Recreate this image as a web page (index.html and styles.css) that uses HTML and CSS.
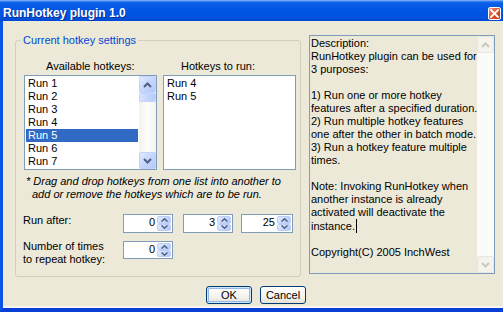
FILE: index.html
```html
<!DOCTYPE html>
<html>
<head>
<meta charset="utf-8">
<title>RunHotkey plugin 1.0</title>
<link rel="stylesheet" href="styles.css">
</head>
<body>
<div class="window">
  <div class="titlebar">
    <span class="title">RunHotkey plugin 1.0</span>
    <span class="close"><svg width="9" height="9" viewBox="0 0 9 9"><path d="M1 1L8 8M8 1L1 8" stroke="#fff" stroke-width="1.8" stroke-linecap="square"/></svg></span>
  </div>
  <div class="client">
    <div class="main">
      <fieldset class="group">
        <legend>Current hotkey settings</legend>
        <div class="lists">
          <div class="col">
            <div class="cap cap-a">Available hotkeys:</div>
            <div class="listbox">
              <ul class="items">
                <li>Run 1</li>
                <li>Run 2</li>
                <li>Run 3</li>
                <li>Run 4</li>
                <li class="sel">Run 5</li>
                <li>Run 6</li>
                <li>Run 7</li>
              </ul>
              <div class="vscroll">
                <div class="sb-btn"><svg width="9" height="6" viewBox="0 0 9 6"><path d="M1 5L4.5 1.5L8 5" fill="none" stroke="#4d6185" stroke-width="2"/></svg></div>
                <div class="thumb"></div>
                <div class="track"></div>
                <div class="sb-btn"><svg width="9" height="6" viewBox="0 0 9 6"><path d="M1 1L4.5 4.5L8 1" fill="none" stroke="#4d6185" stroke-width="2"/></svg></div>
              </div>
            </div>
          </div>
          <div class="col">
            <div class="cap cap-b">Hotkeys to run:</div>
            <div class="listbox">
              <ul class="items">
                <li>Run 4</li>
                <li>Run 5</li>
              </ul>
            </div>
          </div>
        </div>
        <p class="note">* Drag and drop hotkeys from one list into another to<br>add or remove the hotkeys which are to be run.</p>
        <div class="settings">
          <div class="lbl">Run after:</div>
          <div class="spin"><span class="spin-val">0</span><span class="spin-btns"><span><svg width="7" height="4" viewBox="0 0 7 4"><path d="M0.5 3.5L3.5 0.8L6.5 3.5" fill="none" stroke="#4d6185" stroke-width="1.5"/></svg></span><span><svg width="7" height="4" viewBox="0 0 7 4"><path d="M0.5 0.5L3.5 3.2L6.5 0.5" fill="none" stroke="#4d6185" stroke-width="1.5"/></svg></span></span></div>
          <div class="spin"><span class="spin-val">3</span><span class="spin-btns"><span><svg width="7" height="4" viewBox="0 0 7 4"><path d="M0.5 3.5L3.5 0.8L6.5 3.5" fill="none" stroke="#4d6185" stroke-width="1.5"/></svg></span><span><svg width="7" height="4" viewBox="0 0 7 4"><path d="M0.5 0.5L3.5 3.2L6.5 0.5" fill="none" stroke="#4d6185" stroke-width="1.5"/></svg></span></span></div>
          <div class="spin spin-wide"><span class="spin-val">25</span><span class="spin-btns"><span><svg width="7" height="4" viewBox="0 0 7 4"><path d="M0.5 3.5L3.5 0.8L6.5 3.5" fill="none" stroke="#4d6185" stroke-width="1.5"/></svg></span><span><svg width="7" height="4" viewBox="0 0 7 4"><path d="M0.5 0.5L3.5 3.2L6.5 0.5" fill="none" stroke="#4d6185" stroke-width="1.5"/></svg></span></span></div>
          <div class="lbl">Number of times<br>to repeat hotkey:</div>
          <div class="spin spin-low"><span class="spin-val">0</span><span class="spin-btns"><span><svg width="7" height="4" viewBox="0 0 7 4"><path d="M0.5 3.5L3.5 0.8L6.5 3.5" fill="none" stroke="#4d6185" stroke-width="1.5"/></svg></span><span><svg width="7" height="4" viewBox="0 0 7 4"><path d="M0.5 0.5L3.5 3.2L6.5 0.5" fill="none" stroke="#4d6185" stroke-width="1.5"/></svg></span></span></div>
        </div>
      </fieldset>
      <div class="desc">
        <div class="desc-text">Description:<br>RunHotkey plugin can be used for<br>3 purposes:<br><br>1) Run one or more hotkey<br>features after a specified duration.<br>2) Run multiple hotkey features<br>one after the other in batch mode.<br>3) Run a hotkey feature multiple<br>times.<br><br>Note: Invoking RunHotkey when<br>another instance is already<br>activated will deactivate the<br>instance.<span class="caret"></span><br><br>Copyright(C) 2005 InchWest</div>
        <div class="vscroll off">
          <div class="sb-btn"><svg width="9" height="6" viewBox="0 0 9 6"><path d="M1 5L4.5 1.5L8 5" fill="none" stroke="#cac8bb" stroke-width="2"/></svg></div>
          <div class="track"></div>
          <div class="sb-btn"><svg width="9" height="6" viewBox="0 0 9 6"><path d="M1 1L4.5 4.5L8 1" fill="none" stroke="#cac8bb" stroke-width="2"/></svg></div>
        </div>
      </div>
    </div>
    <div class="buttons">
      <button class="btn btn-default">OK</button>
      <button class="btn">Cancel</button>
    </div>
  </div>
</div>
</body>
</html>
```

FILE: styles.css
```css
* { box-sizing: border-box; }
html, body { margin: 0; padding: 0; }
body {
  width: 503px;
  height: 312px;
  overflow: hidden;
  font-family: "Liberation Sans", Arial, sans-serif;
  font-size: 11px;
  line-height: 13px;
  color: #000;
  background: #ece9d8;
}
.window {
  width: 503px;
  height: 312px;
  display: flex;
  flex-direction: column;
}
.titlebar {
  height: 21px;
  flex: none;
  display: flex;
  align-items: flex-start;
  padding: 6px 2px 0 3px;
  background: linear-gradient(#a9c8fb 0, #3d86f2 1px, #0a5ee8 3px, #0056e6 10px, #0053e0 17px, #0049d4 21px);
}
.title {
  font-weight: bold;
  font-size: 12px;
  line-height: 15px;
  color: #fff;
  text-shadow: 1px 1px 0 #0b2f8c;
  white-space: nowrap;
}
.close {
  margin-left: auto;
  margin-top: 1px;
  width: 13px;
  height: 13px;
  border: 1px solid #fff;
  border-radius: 2px;
  background: linear-gradient(135deg, #f39a7c 0%, #e2552f 45%, #c53714 100%);
  display: flex;
  align-items: center;
  justify-content: center;
}
.close svg { display: block; }
.client {
  flex: 1;
  display: flex;
  flex-direction: column;
  background: #ece9d8;
  border-left: 3px solid #0a56e4;
  border-bottom: 4px solid #0a3fd6;
  box-shadow: inset 0 -2px 0 #f7f6f1;
}
.main {
  display: flex;
  align-items: flex-start;
  padding: 13px 0 0 12px;
}
.group {
  margin: 0;
  width: 286px;
  height: 243px;
  padding: 0 4px 0 8px;
  border: 1px solid #d0d0bf;
  border-radius: 3px;
  min-width: 0;
}
.group legend {
  margin-left: -3px;
  padding: 0 2px;
  color: #0046d5;
  line-height: 13px;
}
.lists {
  display: flex;
  gap: 6px;
  padding-top: 13px;
}
.col {
  width: 133px;
  display: flex;
  flex-direction: column;
}
.cap {
  margin-bottom: 2px;
  white-space: nowrap;
}
.cap-a { padding-left: 22px; }
.cap-b { padding-left: 18px; }
.listbox {
  height: 95px;
  border: 1px solid #7f9db9;
  background: #fff;
  display: flex;
}
.items {
  list-style: none;
  margin: 0;
  padding: 1px;
  flex: 1;
  min-width: 0;
  overflow: hidden;
}
.items li {
  height: 13px;
  padding-left: 2px;
  white-space: nowrap;
}
.items li.sel {
  background: #316ac5;
  color: #fff;
}
.vscroll {
  width: 17px;
  flex: none;
  display: flex;
  flex-direction: column;
  background: linear-gradient(90deg, #f3f1ec, #fdfdfa 50%, #f3f1ec);
}
.sb-btn {
  height: 17px;
  flex: none;
  display: flex;
  align-items: center;
  justify-content: center;
  border: 1px solid #c3d3fd;
  border-radius: 2px;
  background: linear-gradient(135deg, #e2eafe 0%, #c6d5fb 50%, #b4c8f6 100%);
}
.sb-btn svg { display: block; }
.thumb {
  height: 9px;
  flex: none;
  border: 1px solid #c3d3fd;
  border-radius: 2px;
  background: linear-gradient(90deg, #d8e3fd, #c5d5fb 50%, #b9cbf8);
}
.track { flex: 1; }
.vscroll.off { background: #fbfbf9; }
.vscroll.off .sb-btn {
  border-color: #e8e7df;
  background: #f4f3ee;
}
.note {
  margin: 5px 0 0 2px;
  padding-left: 6px;
  text-indent: -6px;
  font-style: italic;
  white-space: nowrap;
}
.settings {
  display: grid;
  grid-template-columns: 99px 60px 58px 52px;
  row-gap: 7px;
  margin-top: 13px;
}
.lbl {
  margin-left: -1px;
  white-space: nowrap;
}
.spin {
  width: 50px;
  height: 19px;
  border: 1px solid #7f9db9;
  background: #fff;
  display: flex;
}
.spin-wide { width: 52px; }
.spin-low { height: 18px; margin-top: 1px; }
.spin-val {
  flex: 1;
  text-align: right;
  line-height: 14px;
  padding-right: 2px;
}
.spin-btns {
  width: 15px;
  flex: none;
  display: flex;
  flex-direction: column;
  padding: 1px 1px 1px 0;
}
.spin-btns span {
  flex: 1;
  display: flex;
  align-items: center;
  justify-content: center;
  border: 1px solid #bccdf6;
  border-radius: 2px;
  background: linear-gradient(135deg, #e4ecfe 0%, #c8d7fb 55%, #b6c9f6 100%);
}
.spin-btns svg { display: block; }
.desc {
  margin: 1px 0 0 8px;
  width: 186px;
  height: 239px;
  border: 1px solid #7f9db9;
  display: flex;
}
.desc-text {
  flex: 1;
  padding: 1px 0 0 1px;
  white-space: nowrap;
  overflow: hidden;
}
.caret {
  display: inline-block;
  width: 1px;
  height: 14px;
  background: #000;
  vertical-align: -3px;
  margin-left: 1px;
}
.buttons {
  display: flex;
  justify-content: center;
  gap: 8px;
  padding: 9px 0 0 6px;
}
.btn {
  width: 46px;
  height: 18px;
  margin: 0;
  padding: 0;
  border: 1px solid #003c74;
  border-radius: 3px;
  background: linear-gradient(#ffffff 0%, #f5f4ef 55%, #e4e2d8 100%);
  font: inherit;
  color: #000;
  line-height: 14px;
  text-align: center;
}
.btn-default {
  box-shadow: inset 0 0 0 1px #cee7ff, inset 0 0 0 2px #98b8ea;
}
```
